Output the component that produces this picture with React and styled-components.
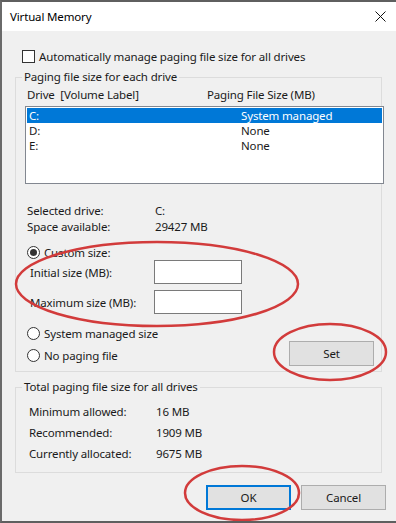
import React from 'react';
import styled, { createGlobalStyle } from 'styled-components';

const GlobalStyle = createGlobalStyle`
  html, body {
    margin: 0;
    padding: 0;
    background: #f0f0f0;
  }
  body {
    font-family: "Noto Sans", "Open Sans", sans-serif;
    font-size: 11.5px;
    letter-spacing: -0.15px;
    color: #1a1a1a;
  }
`;

const Window = styled.div`
  position: relative;
  width: 396px;
  height: 523px;
  box-sizing: border-box;
  border-top: 2px solid #5f5f5f;
  border-left: 2px solid #6a6a6a;
  border-bottom: 2px solid #5f5f5f;
  background: #f0f0f0;
  display: flex;
  flex-direction: column;
  overflow: hidden;
`;

const TitleBar = styled.div`
  height: 29px;
  background: #fff;
  display: flex;
  align-items: center;
  justify-content: space-between;
  padding: 0 10px 0 8px;
  flex-shrink: 0;
`;

const Title = styled.span`
  color: #000;
`;

const Body = styled.div`
  padding: 0 10px 0 13px;
  display: flex;
  flex-direction: column;
`;

const CheckRow = styled.label`
  display: flex;
  align-items: center;
  height: 16px;
  margin: 17px 0 0 7px;
  gap: 4px;
`;

const CheckBox = styled.span`
  width: 11px;
  height: 11px;
  border: 1px solid #333;
  background: #fff;
`;

const Group = styled.fieldset`
  margin: ${p => p.$top}px 0 0 0;
  padding: 0;
  width: 367px;
  box-sizing: border-box;
  border: 1px solid #dcdcdc;
  min-width: 0;
`;

const Legend = styled.legend`
  margin-left: 6px;
  padding: 0 2px;
  line-height: 16px;
`;

const Inner = styled.div`
  padding: ${p => p.$pad};
`;

const HeaderRow = styled.div`
  display: grid;
  grid-template-columns: 180px 1fr;
  line-height: 16px;
  padding-left: 2px;
`;

const ListBox = styled.div`
  margin-top: 3px;
  width: 359px;
  height: 78px;
  box-sizing: border-box;
  border: 1px solid #828790;
  background: #fff;
  padding: 1px 1px;
`;

const ListRow = styled.div`
  display: grid;
  grid-template-columns: 212px 1fr;
  height: 15px;
  line-height: 15px;
  padding-left: 2px;
  background: ${p => (p.$selected ? '#0078d7' : 'transparent')};
  color: ${p => (p.$selected ? '#fff' : '#1a1a1a')};
`;

const InfoGrid = styled.div`
  display: grid;
  grid-template-columns: ${p => p.$col}px 1fr;
  grid-auto-rows: ${p => p.$row}px;
  line-height: ${p => p.$row}px;
  margin-top: ${p => p.$top}px;
  padding-left: ${p => p.$left}px;
`;

const RadioRow = styled.div`
  display: flex;
  align-items: center;
  gap: 4px;
  height: ${p => p.$h}px;
  padding-left: 2px;
  margin-top: ${p => p.$top || 0}px;
`;

const Radio = styled.span`
  width: 11px;
  height: 11px;
  border-radius: 50%;
  border: 1px solid #333;
  background: #fff;
  display: flex;
  align-items: center;
  justify-content: center;

  &::after {
    content: '';
    display: ${p => (p.$checked ? 'block' : 'none')};
    width: 7px;
    height: 7px;
    border-radius: 50%;
    background: #333;
  }
`;

const SizeRow = styled.div`
  display: grid;
  grid-template-columns: 124px 88px;
  align-items: center;
  padding-left: 5px;
  margin-top: ${p => p.$top || 0}px;
`;

const TextBox = styled.div`
  height: 24px;
  box-sizing: border-box;
  border: 1px solid #7a7a7a;
  background: #fff;
`;

const BottomRow = styled.div`
  display: flex;
  justify-content: space-between;
  margin-top: 8px;
`;

const Button = styled.button`
  width: 85px;
  height: 25px;
  box-sizing: border-box;
  font: inherit;
  letter-spacing: inherit;
  color: #1a1a1a;
  background: #e1e1e1;
  border: ${p => (p.$default ? '2px solid #0078d7' : '1px solid #adadad')};
  padding: 0;
  margin-top: ${p => p.$top || 0}px;
`;

const Buttons = styled.div`
  display: flex;
  justify-content: flex-end;
  gap: 10px;
  margin-top: 12px;
`;

const Marks = styled.svg`
  position: absolute;
  left: -2px;
  top: -2px;
  pointer-events: none;
`;

const CloseIcon = () => (
  <svg width="11" height="11" viewBox="0 0 11 11">
    <path d="M0.5 0.5 L10.5 10.5 M10.5 0.5 L0.5 10.5" stroke="#111" strokeWidth="1" fill="none" />
  </svg>
);

export default function App() {
  return (
    <>
      <GlobalStyle />
      <Window>
        <TitleBar>
          <Title>Virtual Memory</Title>
          <CloseIcon />
        </TitleBar>
        <Body>
          <CheckRow>
            <CheckBox />
            Automatically manage paging file size for all drives
          </CheckRow>

          <Group $top={5}>
            <Legend>Paging file size for each drive</Legend>
            <Inner $pad="2px 7px 5px 9px">
              <HeaderRow>
                <span>Drive&nbsp; [Volume Label]</span>
                <span>Paging File Size (MB)</span>
              </HeaderRow>
              <ListBox>
                <ListRow $selected>
                  <span>C:</span>
                  <span>System managed</span>
                </ListRow>
                <ListRow>
                  <span>D:</span>
                  <span>None</span>
                </ListRow>
                <ListRow>
                  <span>E:</span>
                  <span>None</span>
                </ListRow>
              </ListBox>

              <InfoGrid $col={128} $row={16} $top={19} $left={2}>
                <span>Selected drive:</span>
                <span>C:</span>
                <span>Space available:</span>
                <span>29427 MB</span>
              </InfoGrid>

              <RadioRow $h={16} $top={9}>
                <Radio $checked />
                Custom size:
              </RadioRow>
              <SizeRow>
                <span>Initial size (MB):</span>
                <TextBox />
              </SizeRow>
              <SizeRow $top={6}>
                <span>Maximum size (MB):</span>
                <TextBox />
              </SizeRow>

              <BottomRow>
                <div>
                  <RadioRow $h={22}>
                    <Radio />
                    System managed size
                  </RadioRow>
                  <RadioRow $h={22}>
                    <Radio />
                    No paging file
                  </RadioRow>
                </div>
                <Button $top={19}>Set</Button>
              </BottomRow>
            </Inner>
          </Group>

          <Group $top={7}>
            <Legend>Total paging file size for all drives</Legend>
            <Inner $pad="6px 7px 8px 13px">
              <InfoGrid $col={127} $row={21} $top={0} $left={0}>
                <span>Minimum allowed:</span>
                <span>16 MB</span>
                <span>Recommended:</span>
                <span>1909 MB</span>
                <span>Currently allocated:</span>
                <span>9675 MB</span>
              </InfoGrid>
            </Inner>
          </Group>

          <Buttons>
            <Button $default>OK</Button>
            <Button>Cancel</Button>
          </Buttons>
        </Body>

        <Marks width="396" height="523" viewBox="0 0 396 523">
          <g fill="none" stroke="#d23b3b" strokeWidth="2.5">
            <ellipse cx="157" cy="284" rx="141" ry="42" />
            <ellipse cx="330" cy="352" rx="56" ry="28" />
            <ellipse cx="242" cy="493" rx="57" ry="27" />
          </g>
        </Marks>
      </Window>
    </>
  );
}
